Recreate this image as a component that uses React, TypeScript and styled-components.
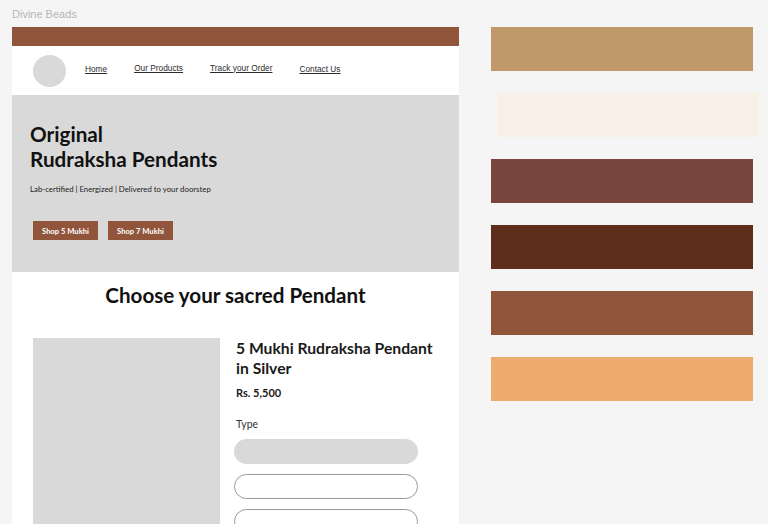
import React from "react";
import styled, { createGlobalStyle } from "styled-components";

const Global = createGlobalStyle`
  html, body { margin: 0; padding: 0; background: #f5f5f5; }
  body { font-family: "Liberation Sans", Arial, sans-serif; }
  #root { height: 524px; overflow: hidden; }
`;

const Canvas = styled.div`
  display: flex;
  align-items: flex-start;
  gap: 32px;
  padding-left: 12px;
  height: 524px;
  overflow: hidden;
`;

const LeftCol = styled.div`
  display: flex;
  flex-direction: column;
  width: 447px;
`;

const FrameLabel = styled.div`
  font-family: "Liberation Sans", Arial, sans-serif;
  font-size: 11px;
  color: #b5b5b5;
  height: 27px;
  line-height: 28px;
`;

const Frame = styled.div`
  background: #ffffff;
  display: flex;
  flex-direction: column;
`;

const TopBar = styled.div`
  height: 19px;
  background: #91553c;
`;

const Nav = styled.nav`
  height: 49px;
  display: flex;
  align-items: center;
  padding-left: 21px;
`;

const Logo = styled.div`
  width: 33px;
  height: 32px;
  border-radius: 50%;
  background: #d9d9d9;
  margin-right: 19px;
`;

const NavLinks = styled.div`
  display: flex;
  gap: 27px;
  align-items: center;
`;

const NavLink = styled.a<{ $dy: number }>`
  font-family: "Liberation Sans", Arial, sans-serif;
  font-size: 8.3px;
  color: #2b2b2b;
  text-decoration: underline;
  text-underline-offset: 1px;
  transform: translateY(${(p) => p.$dy}px);
`;

const Hero = styled.section`
  height: 177px;
  background: #d9d9d9;
  box-sizing: border-box;
  padding: 27px 0 0 18px;
  display: flex;
  flex-direction: column;
`;

const HeroTitle = styled.h1`
  margin: 0;
  font-family: Lato, "Noto Sans", sans-serif;
  font-weight: 700;
  font-size: 20.7px;
  line-height: 25px;
  color: #111;
`;

const HeroSub = styled.p`
  margin: 12px 0 0;
  font-family: Lato, "Noto Sans", sans-serif;
  font-size: 7.8px;
  color: #222;
`;

const HeroButtons = styled.div`
  display: flex;
  gap: 10px;
  margin: 27px 0 0 3px;
`;

const ShopButton = styled.button`
  width: 65px;
  height: 19px;
  padding: 0;
  border: none;
  background: #91553c;
  color: #fff;
  font-family: Lato, "Noto Sans", sans-serif;
  font-weight: 700;
  font-size: 7.6px;
`;

const Products = styled.section`
  display: flex;
  flex-direction: column;
  padding-top: 11px;
`;

const SectionTitle = styled.h2`
  margin: 0;
  text-align: center;
  font-family: Lato, "Noto Sans", sans-serif;
  font-weight: 700;
  font-size: 20.6px;
  line-height: 24px;
  color: #111;
`;

const ProductRow = styled.div`
  display: flex;
  gap: 16px;
  padding: 31px 0 0 21px;
`;

const ProductImage = styled.div`
  width: 187px;
  height: 260px;
  background: #d9d9d9;
`;

const ProductInfo = styled.div`
  display: flex;
  flex-direction: column;
  width: 210px;
`;

const ProductTitle = styled.h3`
  margin: 0;
  font-family: Lato, "Noto Sans", sans-serif;
  font-weight: 700;
  font-size: 15.7px;
  line-height: 20px;
  color: #1a1a1a;
`;

const Price = styled.div`
  margin-top: 8px;
  font-family: Lato, "Noto Sans", sans-serif;
  font-weight: 700;
  font-size: 11px;
  color: #1a1a1a;
`;

const OptionLabel = styled.div`
  margin-top: 19px;
  font-family: Lato, "Noto Sans", sans-serif;
  font-size: 10.5px;
  color: #333;
`;

const Options = styled.div`
  display: flex;
  flex-direction: column;
  gap: 10px;
  margin: 9px 0 0 -2px;
`;

const Pill = styled.div<{ $filled?: boolean }>`
  width: 184px;
  height: 25px;
  box-sizing: border-box;
  border-radius: 13px;
  background: ${(p) => (p.$filled ? "#d9d9d9" : "#ffffff")};
  border: ${(p) => (p.$filled ? "none" : "1px solid #9a9a9a")};
`;

const Palette = styled.div`
  display: flex;
  flex-direction: column;
  gap: 22px;
  padding-top: 27px;
`;

const Swatch = styled.div<{ $color: string; $shift?: number }>`
  width: 262px;
  height: 44px;
  background: ${(p) => p.$color};
  margin-left: ${(p) => p.$shift || 0}px;
`;

const swatches = [
  { c: "#c0996b" },
  { c: "#f8efe7", s: 6 },
  { c: "#79443b" },
  { c: "#5c2e1b" },
  { c: "#91553c" },
  { c: "#edab6d" },
];

const links = [
  { t: "Home", dy: -2 },
  { t: "Our Products", dy: -3 },
  { t: "Track your Order", dy: -3 },
  { t: "Contact Us", dy: -2 },
];

export default function App() {
  return (
    <>
      <Global />
      <Canvas>
        <LeftCol>
          <FrameLabel>Divine Beads</FrameLabel>
          <Frame>
            <TopBar />
            <Nav>
              <Logo />
              <NavLinks>
                {links.map((l) => (
                  <NavLink key={l.t} $dy={l.dy}>
                    {l.t}
                  </NavLink>
                ))}
              </NavLinks>
            </Nav>
            <Hero>
              <HeroTitle>
                Original
                <br />
                Rudraksha Pendants
              </HeroTitle>
              <HeroSub>Lab-certified | Energized | Delivered to your doorstep</HeroSub>
              <HeroButtons>
                <ShopButton>Shop 5 Mukhi</ShopButton>
                <ShopButton>Shop 7 Mukhi</ShopButton>
              </HeroButtons>
            </Hero>
            <Products>
              <SectionTitle>Choose your sacred Pendant</SectionTitle>
              <ProductRow>
                <ProductImage />
                <ProductInfo>
                  <ProductTitle>
                    5 Mukhi Rudraksha Pendant
                    <br />
                    in Silver
                  </ProductTitle>
                  <Price>Rs. 5,500</Price>
                  <OptionLabel>Type</OptionLabel>
                  <Options>
                    <Pill $filled />
                    <Pill />
                    <Pill />
                  </Options>
                </ProductInfo>
              </ProductRow>
            </Products>
          </Frame>
        </LeftCol>
        <Palette>
          {swatches.map((s, i) => (
            <Swatch key={i} $color={s.c} $shift={s.s} />
          ))}
        </Palette>
      </Canvas>
    </>
  );
}
